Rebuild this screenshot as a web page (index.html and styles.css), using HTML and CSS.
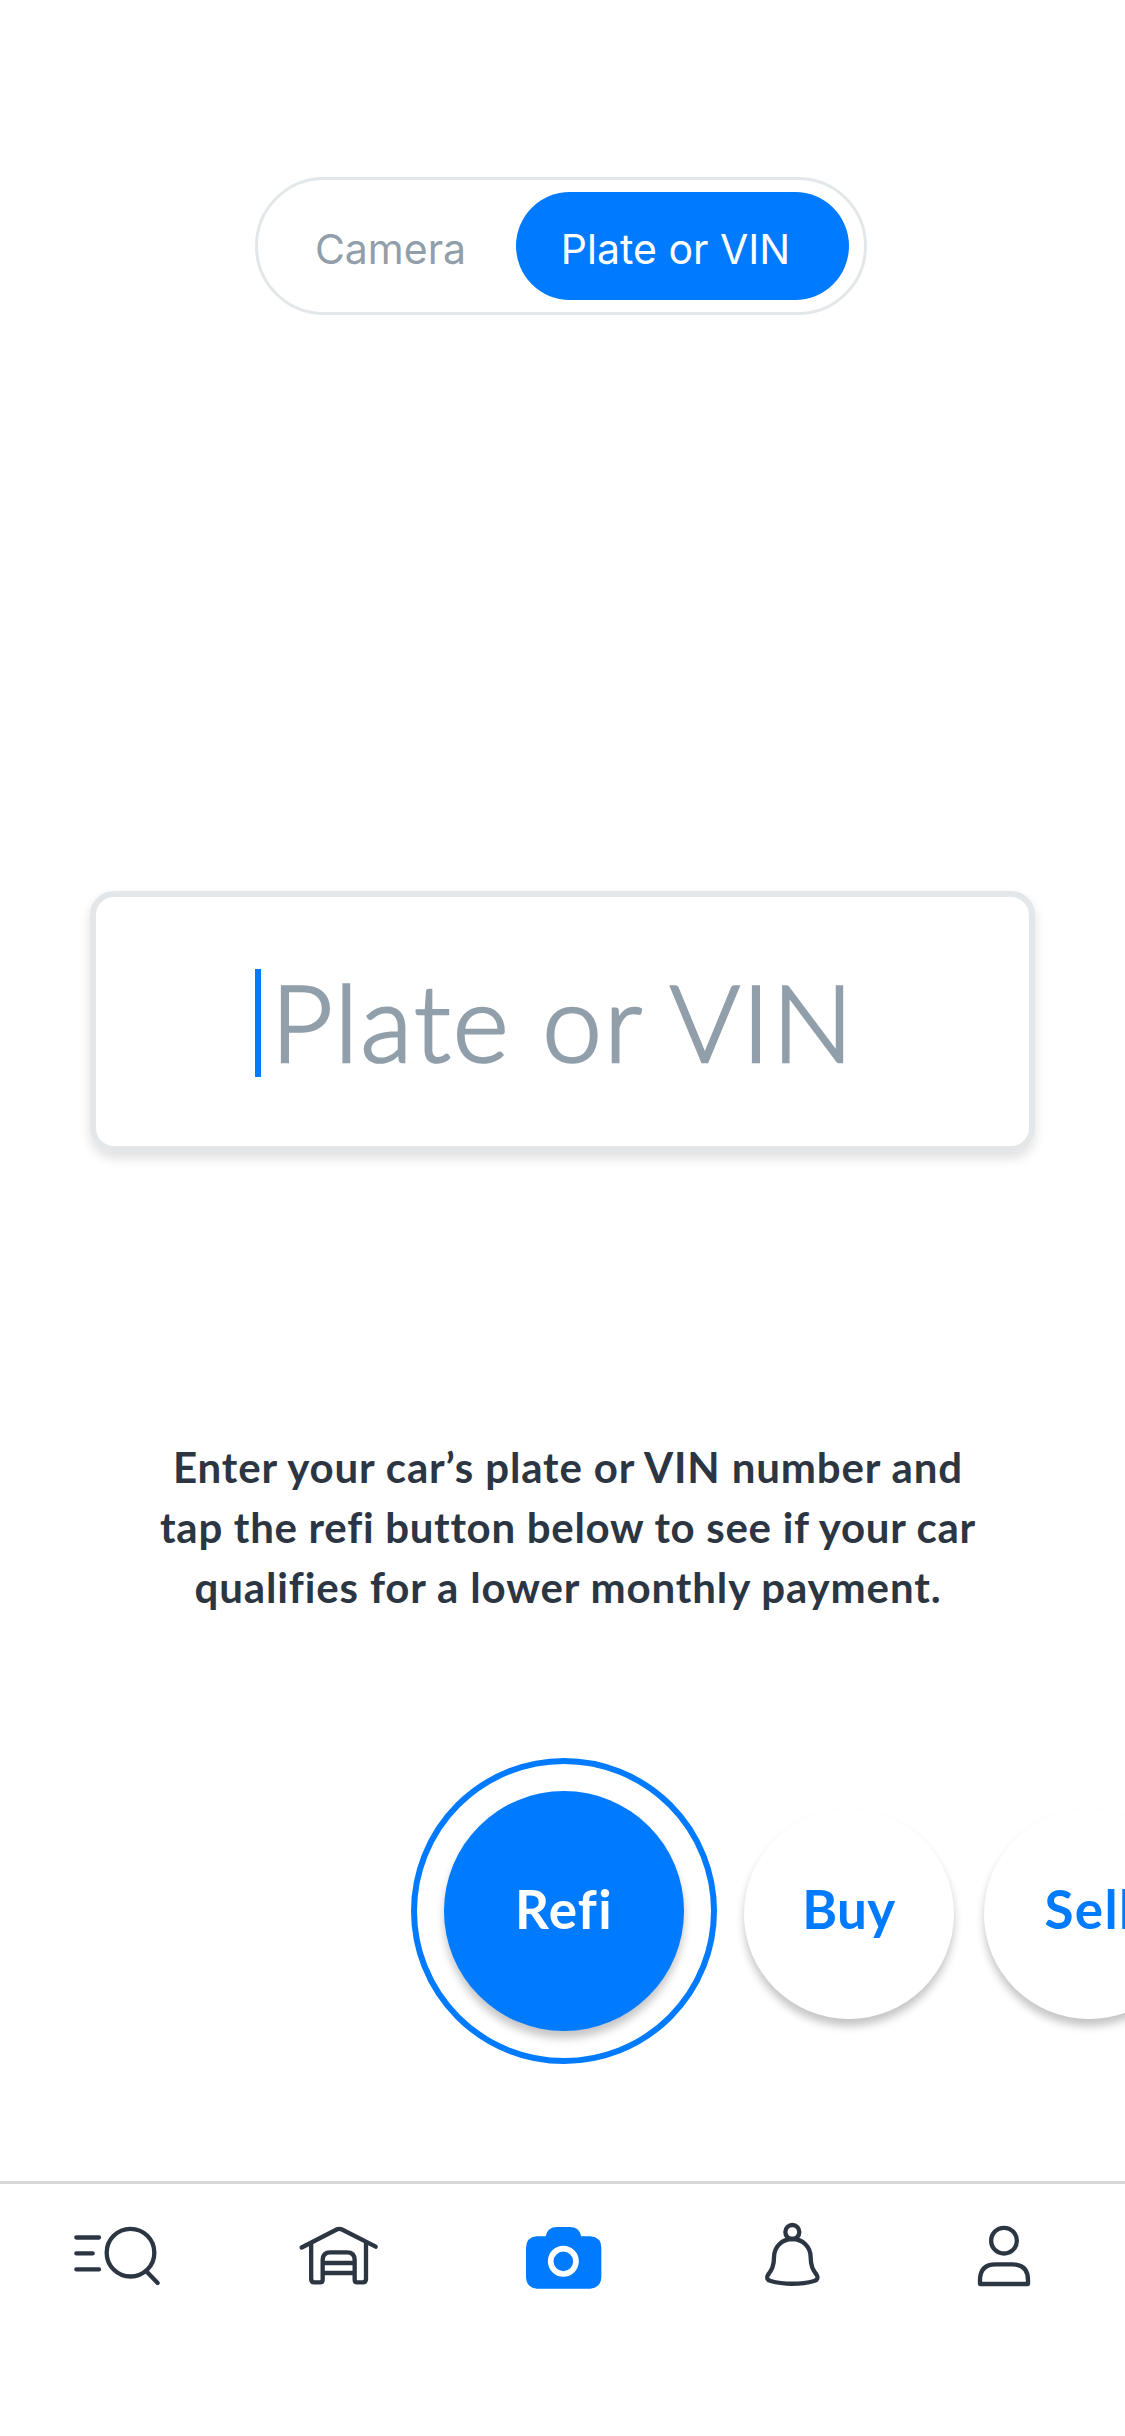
FILE: index.html
```html
<!DOCTYPE html>
<html lang="en">
<head>
<meta charset="utf-8">
<title>Plate or VIN</title>
<link rel="stylesheet" href="styles.css">
</head>
<body>
<main class="screen">
  <div class="segment">
    <button class="segment-item">Camera</button>
    <button class="segment-item segment-active">Plate or VIN</button>
  </div>

  <div class="field">
    <span class="caret"></span>
    <span class="placeholder">Plate or VIN</span>
  </div>

  <p class="hint">
    <span class="line line-wide">Enter your car’s plate or VIN number and</span>
    <span class="line">tap the refi button below to see if your car</span>
    <span class="line line-wide">qualifies for a lower monthly payment.</span>
  </p>

  <div class="actions">
    <div class="ring"><button class="circle circle-main">Refi</button></div>
    <button class="circle">Buy</button>
    <button class="circle circle-sell">Sell</button>
  </div>

  <nav class="tabs">
    <a class="tab"><svg viewBox="9 150 360 210" fill="none">
      <path d="M79 202.500H147M79 250H128M79 298H147M289 304L323 339"/>
      <circle cx="241.500" cy="248" r="71.500"/>
    </svg></a>
    <a class="tab"><svg viewBox="684 150 360 210" fill="none">
      <path d="M755 232.500L860 178.500Q868 174.500 876 178.500L977 230"/>
      <path d="M783.500 220V327Q783.500 337 793.500 337H810Q818 337 818 329V270Q818 247 841 247H891Q914 247 914 270V329Q914 337 922 337H938Q948 337 948 327V220M820 279H912M820 309H912"/>
    </svg></a>
    <a class="tab"><svg class="tab-current" viewBox="9 150 360 210">
      <path d="M110 199H137Q142 171 172 171H209Q238 171 244 199H271Q304 202 304 233V322Q303 353 271 356H110Q79 353 78 322V233Q79 202 110 199Z"/>
      <circle class="lens" cx="190" cy="274" r="38"/>
    </svg></a>
    <a class="tab"><svg viewBox="684 150 360 210" fill="none">
      <circle cx="877" cy="186" r="21"/>
      <path d="M877 207C846 207 822 231 822 262C822 289 815 300 805 313C798 323 801 330 812 333C850 344 904 344 942 333C953 330 956 323 949 313C939 300 932 289 932 262C932 231 908 207 877 207Z"/>
    </svg></a>
    <a class="tab"><svg viewBox="39 150 360 210" fill="none">
      <circle cx="192" cy="212" r="38.500"/>
      <path d="M120 342V330Q120 283 167 283H217Q264 283 264 330V342Z"/>
    </svg></a>
  </nav>
</main>
</body>
</html>
```
FILE: styles.css
```css
* { box-sizing: border-box; }

body {
  margin: 0;
  background: #fff;
  overflow: hidden;
}

button {
  margin: 0;
  border: 0;
  background: none;
  flex: none;
}

.screen {
  display: flex;
  flex-direction: column;
  width: 1125px;
  height: 2436px;
  padding-top: 177px;
  overflow: hidden;
}

.segment {
  display: flex;
  flex: none;
  width: 612px;
  height: 138px;
  margin-left: 255px;
  padding: 12px 15px;
  border: 3px solid #e3e7ea;
  border-radius: 69px;
}

.segment-item {
  width: 243px;
  height: 108px;
  padding: 6px 8px 0 0;
  border-radius: 54px;
  color: #919fab;
  font: 41px/102px Inter, sans-serif;
  white-space: nowrap;
}

.segment-active {
  width: 333px;
  padding-right: 14px;
  background: #007aff;
  color: #fff;
}

.field {
  display: flex;
  flex: none;
  align-items: center;
  gap: 10px;
  width: 945px;
  height: 261px;
  margin: 576px 0 0 90px;
  padding-left: 159px;
  border: 6px solid #e3e7ea;
  border-radius: 24px;
  box-shadow: 0 6px 12px rgba(0, 0, 0, 0.13);
}

.caret {
  width: 6px;
  height: 108px;
  margin-top: 3px;
  background: #007aff;
}

.placeholder {
  padding-bottom: 2px;
  color: #919fab;
  font: 300 107px/128px Lato, sans-serif;
  letter-spacing: 2.3px;
  -webkit-text-stroke: 2.6px #919fab;
  white-space: nowrap;
}

.hint {
  flex: none;
  width: 900px;
  margin: 285px 0 0 118px;
  color: #2c3643;
  font: 700 42px/60px Lato, sans-serif;
  text-align: center;
}

.line {
  display: block;
  letter-spacing: 0.7px;
  white-space: nowrap;
}

.line-wide { letter-spacing: 0.87px; }

.actions {
  display: flex;
  flex: none;
  height: 306px;
  margin-top: 141px;
  padding-left: 411px;
}

.ring {
  flex: none;
  width: 306px;
  height: 306px;
  margin-right: 27px;
  padding: 27px;
  border: 6px solid #007aff;
  border-radius: 50%;
}

.circle {
  width: 210px;
  height: 210px;
  margin: 51px 30px 0 0;
  padding: 0 0 10px;
  border-radius: 50%;
  box-shadow: 0 7px 8px rgba(0, 0, 0, 0.23);
  color: #007aff;
  font: 700 53px/64px Lato, sans-serif;
  letter-spacing: 0.4px;
}

.circle-main {
  width: 240px;
  height: 240px;
  margin: 0;
  padding-bottom: 4px;
  background: #007aff;
  color: #fff;
  letter-spacing: 1.3px;
}

.circle-sell { letter-spacing: 1.4px; }

.tabs {
  display: grid;
  flex: none;
  grid-template-columns: repeat(5, 225px);
  height: 255px;
  margin-top: 117px;
  padding-top: 36px;
  border-top: 3px solid #d6d8d9;
}

.tab {
  display: flex;
  justify-content: center;
}

.tab svg {
  width: 120px;
  height: 70px;
  stroke: #2c3643;
  stroke-width: 13;
  stroke-linecap: round;
  stroke-linejoin: round;
}

.tab .tab-current {
  fill: #007aff;
  stroke: none;
}

.lens {
  stroke: #fff;
  stroke-width: 17;
}
```
